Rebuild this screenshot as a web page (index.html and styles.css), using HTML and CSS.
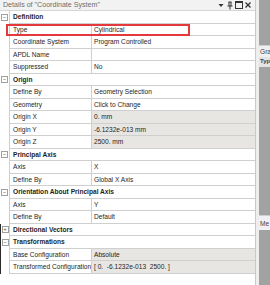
FILE: index.html
```html
<!DOCTYPE html>
<html>
  <head>
    <meta name="viewport" content="width=device-width, initial-scale=1">
    <link rel="stylesheet" href="styles.css">
  </head>
  <body>
    <div class="screen">
      <div class="details">
        <div class="titlebar">
          <span class="title">Details of "Coordinate System"</span>
          <span class="dots"></span>
          <span class="tools">
            <svg width="8" height="8" viewBox="0 0 8 8"><path d="M1.5 3h5l-2.5 3z" fill="#333"/></svg>
            <svg width="8" height="9" viewBox="0 0 8 9"><path d="M2.5 1h3M3 1v4M5 1v4M1.5 5h5M4 5v3.5" stroke="#333" fill="none"/></svg>
            <svg width="8" height="8" viewBox="0 0 8 8"><rect x="0.5" y="0.5" width="7" height="7" stroke="#333" fill="none"/><path d="M0.5 1.5h7" stroke="#333"/></svg>
            <svg width="8" height="8" viewBox="0 0 8 8"><path d="M1.5 1.5l5 5M6.5 1.5l-5 5" stroke="#333" stroke-width="1.3"/></svg>
          </span>
        </div>

        <div class="row group"><span class="gutter"><i class="toggle">−</i></span><span class="head">Definition</span></div>
        <div class="row mark"><span class="gutter"></span><span class="key">Type</span><span class="val">Cylindrical</span></div>
        <div class="row"><span class="gutter"></span><span class="key">Coordinate System</span><span class="val">Program Controlled</span></div>
        <div class="row"><span class="gutter"></span><span class="key">APDL Name</span><span class="val"></span></div>
        <div class="row"><span class="gutter"></span><span class="key">Suppressed</span><span class="val">No</span></div>

        <div class="row group"><span class="gutter"><i class="toggle">−</i></span><span class="head">Origin</span></div>
        <div class="row"><span class="gutter"></span><span class="key">Define By</span><span class="val">Geometry Selection</span></div>
        <div class="row"><span class="gutter"></span><span class="key">Geometry</span><span class="val">Click to Change</span></div>
        <div class="row"><span class="gutter"></span><span class="key">Origin X</span><span class="val ro">0. mm</span></div>
        <div class="row"><span class="gutter"></span><span class="key">Origin Y</span><span class="val ro">-6.1232e-013 mm</span></div>
        <div class="row"><span class="gutter"></span><span class="key">Origin Z</span><span class="val ro">2500. mm</span></div>

        <div class="row group"><span class="gutter"><i class="toggle">−</i></span><span class="head">Principal Axis</span></div>
        <div class="row"><span class="gutter"></span><span class="key">Axis</span><span class="val">X</span></div>
        <div class="row"><span class="gutter"></span><span class="key">Define By</span><span class="val">Global X Axis</span></div>

        <div class="row group"><span class="gutter"><i class="toggle">−</i></span><span class="head">Orientation About Principal Axis</span></div>
        <div class="row"><span class="gutter"></span><span class="key">Axis</span><span class="val">Y</span></div>
        <div class="row"><span class="gutter"></span><span class="key">Define By</span><span class="val">Default</span></div>

        <div class="row group edge"><span class="gutter"><i class="toggle">+</i></span><span class="head">Directional Vectors</span></div>
        <div class="row group edge"><span class="gutter"><i class="toggle">−</i></span><span class="head">Transformations</span></div>
        <div class="row edge"><span class="gutter"></span><span class="key">Base Configuration</span><span class="val ro">Absolute</span></div>
        <div class="row edge"><span class="gutter"></span><span class="key">Transformed Configuration</span><span class="val ro">[ 0.&nbsp; -6.1232e-013&nbsp; 2500. ]</span></div>
      </div>

      <div class="split"></div>

      <div class="side">
        <div class="fill top"></div>
        <div class="tab">Gra</div>
        <div class="tab sub">Typ</div>
        <div class="fill mid"></div>
        <div class="tab msg">Me</div>
        <div class="fill"></div>
      </div>
    </div>
  </body>
</html>
```

FILE: styles.css
```css
body {
	margin: 0;
	background: #fff;
	font-family: "Liberation Sans", Arial, sans-serif;
	font-size: 6.6px;
	color: #1e1e1e;
}

.screen {
	display: flex;
	width: 270px;
	height: 285px;
	overflow: hidden;
}

.details {
	width: 256px;
	flex: none;
	border-right: 1px solid #c9c9c9;
	box-sizing: border-box;
	background: #fff;
}

.titlebar {
	display: flex;
	align-items: center;
	height: 11px;
	padding-left: 3px;
	background: #f2f2f2;
	border-bottom: 1px solid #d6d6d6;
	box-sizing: border-box;
}

.title {
	color: #6e6e6e;
	font-size: 7.1px;
	white-space: nowrap;
}

.dots {
	flex: 1;
	height: 4px;
	margin: 0 4px 0 3px;
	background-image: radial-gradient(circle, #b4b4b4 0.6px, transparent 0.7px);
	background-size: 2px 2px;
}

.tools {
	display: flex;
	align-items: center;
	gap: 1px;
	padding-right: 3px;
}

.row {
	display: flex;
	height: 12.5px;
	line-height: 12px;
	white-space: nowrap;
}

.gutter {
	width: 9px;
	flex: none;
	display: flex;
	align-items: center;
	justify-content: center;
	box-sizing: border-box;
}

.edge .gutter {
	border-left: 1px solid #2b2b2b;
}

.toggle {
	width: 5px;
	height: 5px;
	border: 1px solid #a0a0a0;
	font-style: normal;
	font-size: 6px;
	line-height: 5px;
	text-align: center;
	color: #555;
	background: #fff;
}

.head,
.key,
.val {
	border-bottom: 1px solid #cfcfcf;
	box-sizing: border-box;
	overflow: hidden;
}

.head {
	flex: 1;
	padding-left: 3px;
	font-weight: bold;
	border-left: 1px solid #cfcfcf;
}

.key {
	width: 83px;
	flex: none;
	padding-left: 3px;
	border-left: 1px solid #cfcfcf;
	border-right: 1px solid #cfcfcf;
}

.val {
	flex: 1;
	padding-left: 2px;
}

.val.ro {
	background: #e8e6e2;
}

.mark {
	position: relative;
}

.mark::after {
	content: "";
	position: absolute;
	left: 6px;
	top: 0;
	width: 184px;
	height: 12.5px;
	border: 2px solid #e4393c;
	box-sizing: border-box;
}

.split {
	width: 3px;
	flex: none;
	background: #eeeeee;
}

.side {
	flex: 1;
	display: flex;
	flex-direction: column;
	overflow: hidden;
}

.fill {
	flex: 1;
	background: #a2a2a2;
}

.fill.top {
	flex: none;
	height: 45px;
}

.fill.mid {
	flex: none;
	height: 148px;
}

.tab {
	height: 12px;
	line-height: 12px;
	padding-left: 1px;
	background: #f0f0f0;
	border-top: 1px solid #cfcfcf;
	color: #444;
	white-space: nowrap;
	box-sizing: border-box;
}

.tab.sub {
	height: 10px;
	line-height: 9px;
	border-top: none;
	background: #e4e4e4;
	font-weight: bold;
	font-size: 6px;
}

.tab.msg {
	height: 15px;
	line-height: 15px;
	background: #f0f0f6;
}
```
